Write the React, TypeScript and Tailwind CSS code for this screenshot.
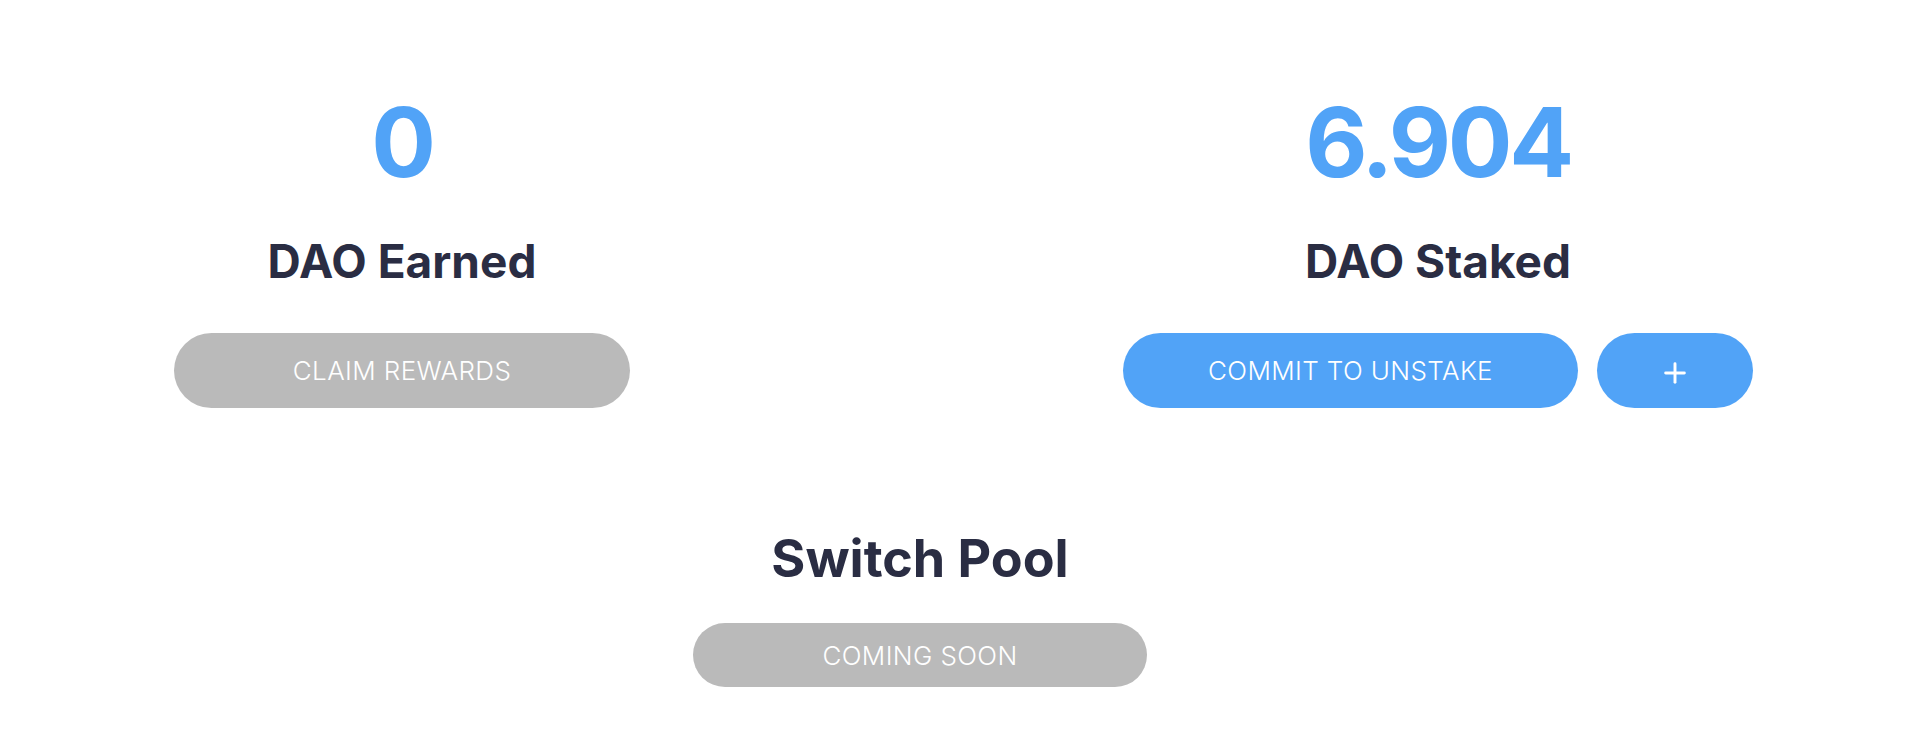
import React from 'react';
import { Plus } from 'lucide-react';

const font = { fontFamily: 'Inter, "Noto Sans", sans-serif' };

function Stat({ value, label }: { value: string; label: string }) {
  return (
    <div className="flex flex-col items-center">
      <div className="text-[96px] font-bold leading-none tracking-[-0.035em] text-[#51a3f7]">{value}</div>
      <div className="mt-[48px] text-[46px] font-bold leading-none text-[#2a2d43]">{label}</div>
    </div>
  );
}

export default function App() {
  return (
    <div className="min-h-[752px] w-[1925px] bg-white" style={font}>
      {/* Top row: earned / staked */}
      <div className="flex pt-[94px]">
        <div className="flex w-[804px] flex-col items-center">
          <Stat value="0" label="DAO Earned" />
          <button className="mt-[49px] h-[75px] w-[456px] rounded-full bg-[#bababa] text-[26px] font-light tracking-[0.015em] text-white">
            CLAIM REWARDS
          </button>
        </div>
        <div className="ml-[234px] flex w-[800px] flex-col items-center">
          <Stat value="6.904" label="DAO Staked" />
          <div className="mt-[49px] flex gap-[19px]">
            <button className="h-[75px] w-[455px] rounded-full bg-[#51a3f7] text-[26px] font-light tracking-[0.015em] text-white">
              COMMIT TO UNSTAKE
            </button>
            <button className="flex h-[75px] w-[156px] items-center justify-center rounded-full bg-[#51a3f7] pt-[5px] text-white">
              <Plus size={32} strokeWidth={2.2} />
            </button>
          </div>
        </div>
      </div>

      {/* Switch pool */}
      <div className="ml-[520px] mt-[125px] flex w-[800px] flex-col items-center">
        <div className="text-[52px] font-bold leading-none text-[#2a2d43]">Switch Pool</div>
        <button className="mt-[38px] h-[64px] w-[454px] rounded-full bg-[#bababa] text-[26px] font-light tracking-[0.015em] text-white">
          COMING SOON
        </button>
      </div>
    </div>
  );
}
